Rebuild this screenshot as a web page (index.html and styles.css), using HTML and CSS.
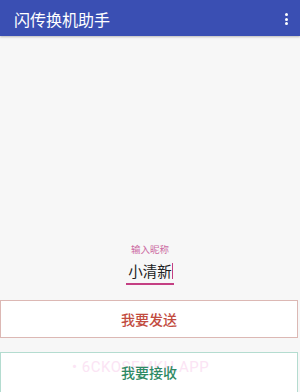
FILE: index.html
```html
<!DOCTYPE html>
<html lang="zh">
<head>
<meta charset="utf-8">
<link rel="stylesheet" href="styles.css">
</head>
<body>
<div class="app">
  <header class="appbar">
    <span class="title">闪传换机助手</span>
    <span class="menu"><i></i><i></i><i></i></span>
  </header>
  <main class="content">
    <div class="field">
      <span class="label">输入昵称</span>
      <span class="input">小清新<span class="cursor"></span></span>
    </div>
    <button class="btn send"><span class="btn-text">我要发送</span></button>
    <button class="btn recv"><span class="btn-text">我要接收</span></button>
    <span class="watermark">• 6CKOSEMKH.APP</span>
  </main>
</div>
</body>
</html>
```
FILE: styles.css
```css
* { box-sizing: border-box; }
html, body { margin: 0; padding: 0; }
body {
  width: 300px;
  height: 392px;
  overflow: hidden;
  background: #f7f7f7;
  font-family: "Noto Sans CJK SC", "Noto Sans", sans-serif;
}
.app { display: flex; flex-direction: column; height: 392px; }
.appbar {
  height: 45px;
  background: #3a4fb3;
  display: flex;
  align-items: center;
  justify-content: space-between;
  padding: 0 14px 0 14px;
  box-shadow: 0 1px 2px rgba(0,0,0,0.25);
  position: relative;
  z-index: 1;
}
.title { color: #fff; font-size: 16px; line-height: 1; margin-top: 2px; }
.menu { display: flex; flex-direction: column; gap: 1.5px; margin-right: -2px; margin-top: 2px; }
.menu i { display: block; width: 3px; height: 3px; border-radius: 50%; background: #fff; }
.content {
  flex: 1;
  display: flex;
  flex-direction: column;
  align-items: center;
  position: relative;
  padding-top: 207px;
}
.field { display: flex; flex-direction: column; align-items: center; }
.label { font-size: 9.5px; color: #cc6aa2; line-height: 12px; }
.input {
  margin-top: 7px;
  font-size: 14.5px;
  color: #222;
  line-height: 18px;
  padding: 0 1px 3px 2px;
  border-bottom: 2px solid #c43f83;
  display: flex;
  align-items: center;
}
.cursor { display: inline-block; width: 1px; height: 16px; background: #c43f83; margin-left: 0; }
.btn {
  font-family: inherit;
  width: 298px;
  align-self: flex-start;
  background: #fff;
  font-size: 14px;
  font-weight: 500;
  cursor: pointer;
}
.btn-text { position: relative; z-index: 2; }
.send {
  margin-top: 15px;
  height: 38px;
  border: 1px solid #dcb8b4;
  color: #c24c3f;
}
.recv {
  margin-top: 14px;
  height: 40px;
  border: 1px solid #b4dcd0;
  border-bottom: none;
  color: #2e8a64;
  padding-bottom: 3px;
}
.watermark {
  position: absolute;
  z-index: 1;
  left: 72px;
  top: 322px;
  font-family: "Roboto", sans-serif;
  font-size: 15px;
  color: #fbe4f4;
  letter-spacing: 0.5px;
  pointer-events: none;
}
```
